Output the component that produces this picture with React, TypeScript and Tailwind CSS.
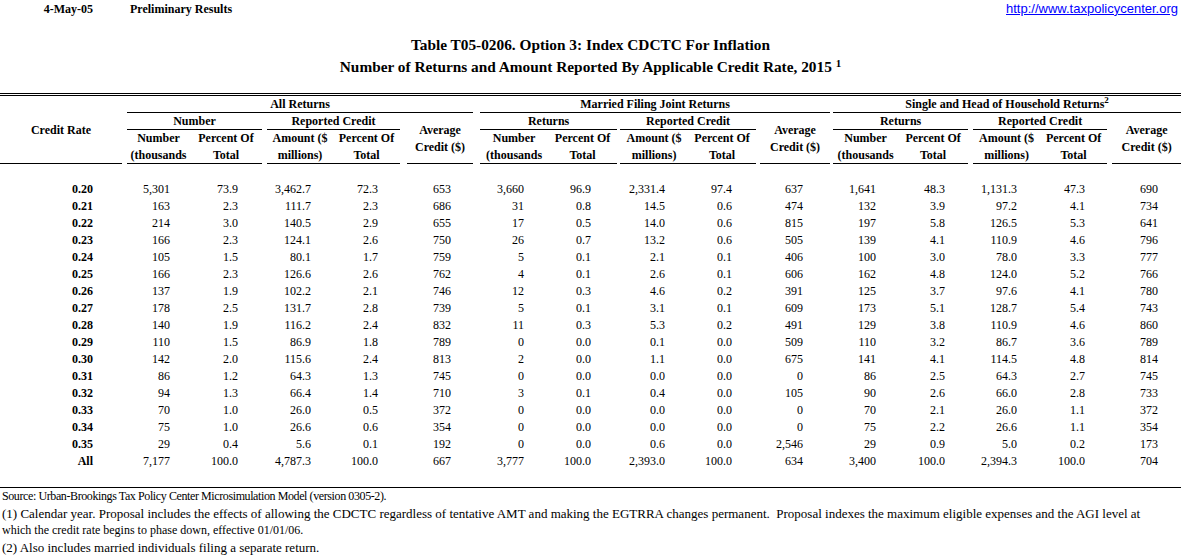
const colWidths = [
  "w-[122px]", "w-[5px]", "w-[63px]", "w-[72px]", "w-[5px]", "w-[66px]", "w-[67px]", "w-[7px]", "w-[66px]",
  "w-[7px]", "w-[68px]", "w-[69px]", "w-[3px]", "w-[68px]", "w-[68px]", "w-[4px]", "w-[70px]",
  "w-[3px]", "w-[65px]", "w-[70px]", "w-[5px]", "w-[67px]", "w-[67px]", "w-[5px]", "w-[69px]",
];

// -1 = spacer column, otherwise index into a data row
const layout = [0, -1, 1, 2, -1, 3, 4, -1, 5, -1, 6, 7, -1, 8, 9, -1, 10, -1, 11, 12, -1, 13, 14, -1, 15];

const pads = [
  "pr-[29px]", "pr-[20px]", "pr-[24px]", "pr-[22px]", "pr-[22px]", "pr-[22px]",
  "pr-[24px]", "pr-[26px]", "pr-[23px]", "pr-[24px]", "pr-[27px]",
  "pr-[22px]", "pr-[23px]", "pr-[23px]", "pr-[22px]", "pr-[23px]",
];

const rows = [
  ["0.20", "5,301", "73.9", "3,462.7", "72.3", "653", "3,660", "96.9", "2,331.4", "97.4", "637", "1,641", "48.3", "1,131.3", "47.3", "690"],
  ["0.21", "163", "2.3", "111.7", "2.3", "686", "31", "0.8", "14.5", "0.6", "474", "132", "3.9", "97.2", "4.1", "734"],
  ["0.22", "214", "3.0", "140.5", "2.9", "655", "17", "0.5", "14.0", "0.6", "815", "197", "5.8", "126.5", "5.3", "641"],
  ["0.23", "166", "2.3", "124.1", "2.6", "750", "26", "0.7", "13.2", "0.6", "505", "139", "4.1", "110.9", "4.6", "796"],
  ["0.24", "105", "1.5", "80.1", "1.7", "759", "5", "0.1", "2.1", "0.1", "406", "100", "3.0", "78.0", "3.3", "777"],
  ["0.25", "166", "2.3", "126.6", "2.6", "762", "4", "0.1", "2.6", "0.1", "606", "162", "4.8", "124.0", "5.2", "766"],
  ["0.26", "137", "1.9", "102.2", "2.1", "746", "12", "0.3", "4.6", "0.2", "391", "125", "3.7", "97.6", "4.1", "780"],
  ["0.27", "178", "2.5", "131.7", "2.8", "739", "5", "0.1", "3.1", "0.1", "609", "173", "5.1", "128.7", "5.4", "743"],
  ["0.28", "140", "1.9", "116.2", "2.4", "832", "11", "0.3", "5.3", "0.2", "491", "129", "3.8", "110.9", "4.6", "860"],
  ["0.29", "110", "1.5", "86.9", "1.8", "789", "0", "0.0", "0.1", "0.0", "509", "110", "3.2", "86.7", "3.6", "789"],
  ["0.30", "142", "2.0", "115.6", "2.4", "813", "2", "0.0", "1.1", "0.0", "675", "141", "4.1", "114.5", "4.8", "814"],
  ["0.31", "86", "1.2", "64.3", "1.3", "745", "0", "0.0", "0.0", "0.0", "0", "86", "2.5", "64.3", "2.7", "745"],
  ["0.32", "94", "1.3", "66.4", "1.4", "710", "3", "0.1", "0.4", "0.0", "105", "90", "2.6", "66.0", "2.8", "733"],
  ["0.33", "70", "1.0", "26.0", "0.5", "372", "0", "0.0", "0.0", "0.0", "0", "70", "2.1", "26.0", "1.1", "372"],
  ["0.34", "75", "1.0", "26.6", "0.6", "354", "0", "0.0", "0.0", "0.0", "0", "75", "2.2", "26.6", "1.1", "354"],
  ["0.35", "29", "0.4", "5.6", "0.1", "192", "0", "0.0", "0.6", "0.0", "2,546", "29", "0.9", "5.0", "0.2", "173"],
  ["All", "7,177", "100.0", "4,787.3", "100.0", "667", "3,777", "100.0", "2,393.0", "100.0", "634", "3,400", "100.0", "2,394.3", "100.0", "704"],
];

const line = "shadow-[inset_0_-1px_0_#000]";

function GroupSub({ first }: { first: string }) {
  return (
    <>
      <td />
      <td colSpan={2} className={`text-center ${line}`}>{first}</td>
      <td />
      <td colSpan={2} className={`text-center ${line}`}>Reported Credit</td>
      <td />
      <td rowSpan={3} className={`text-center align-middle ${line}`}>Average<br />Credit ($)</td>
    </>
  );
}

function ColHeads() {
  return (
    <>
      <td rowSpan={2} />
      <td rowSpan={2} className={`text-center ${line}`}>Number<br />(thousands</td>
      <td rowSpan={2} className={`text-center ${line}`}>Percent Of<br />Total</td>
      <td rowSpan={2} />
      <td rowSpan={2} className={`text-center ${line}`}>Amount ($<br />millions)</td>
      <td rowSpan={2} className={`text-center ${line}`}>Percent Of<br />Total</td>
      <td rowSpan={2} />
    </>
  );
}

export default function App() {
  return (
    <div className="w-[1181px] h-[556px] bg-white text-black font-['Liberation_Serif','Times_New_Roman',serif] overflow-hidden">
      <div className="flex h-[17px] items-center text-[12px] font-bold">
        <span className="w-[93px] text-right">4-May-05</span>
        <span className="ml-[37px]">Preliminary Results</span>
        <a className="ml-auto pr-[3px] font-['Liberation_Sans',Arial,sans-serif] text-[13px] font-normal text-[#0000ff] underline">
          http://www.taxpolicycenter.org
        </a>
      </div>
      <div className="h-[17px]" />
      <div className="text-center text-[15.33px] font-bold leading-[22px]">
        <div className="h-[22px]">Table T05-0206. Option 3: Index CDCTC For Inflation</div>
        <div className="h-[22px]">
          Number of Returns and Amount Reported By Applicable Credit Rate, 2015{" "}
          <span className="relative -top-[5px] text-[11px]">1</span>
        </div>
      </div>
      <div className="h-[15px]" />
      <div className="h-[3px] border-y border-black" />

      <table className="table-fixed w-[1181px] border-collapse text-[12px] leading-[17px]">
        <colgroup>
          {colWidths.map((w, i) => <col key={i} className={w} />)}
        </colgroup>
        <thead className="font-bold">
          <tr className="h-[17px]">
            <td rowSpan={4} className={`text-center align-middle ${line}`}>Credit Rate</td>
            <td />
            <td colSpan={7} className={`text-center ${line}`}>All Returns</td>
            <td />
            <td colSpan={7} className={`text-center ${line}`}>Married Filing Joint Returns</td>
            <td />
            <td colSpan={7} className={`text-center whitespace-nowrap ${line}`}>
              Single and Head of Household Returns<span className="relative -top-[5px] text-[9px] leading-none">2</span>
            </td>
          </tr>
          <tr className="h-[17px]">
            <GroupSub first="Number" />
            <GroupSub first="Returns" />
            <GroupSub first="Returns" />
          </tr>
          <tr className="h-[17px]">
            <ColHeads />
            <ColHeads />
            <ColHeads />
          </tr>
          <tr className="h-[17px]" />
        </thead>
        <tbody>
          <tr className="h-[17px]"><td colSpan={25} /></tr>
          {rows.map((r) => (
            <tr key={r[0]} className="h-[17px]">
              {layout.map((idx, i) =>
                idx < 0 ? (
                  <td key={i} />
                ) : (
                  <td key={i} className={`text-right whitespace-nowrap ${pads[idx]} ${idx === 0 ? "font-bold" : ""}`}>
                    {r[idx]}
                  </td>
                )
              )}
            </tr>
          ))}
          <tr className="h-[17px]"><td colSpan={25} /></tr>
        </tbody>
      </table>

      <div className="h-px bg-black" />
      <div className="pl-[2px] leading-[17px] whitespace-nowrap">
        <div className="text-[12px] tracking-[-0.4px]">Source: Urban-Brookings Tax Policy Center Microsimulation Model (version 0305-2).</div>
        <div className="text-[13px]">(1) Calendar year. Proposal includes the effects of allowing the CDCTC regardless of tentative AMT and making the EGTRRA changes permanent.&nbsp; Proposal indexes the maximum eligible expenses and the AGI level at</div>
        <div className="text-[12px]">which the credit rate begins to phase down, effective 01/01/06.</div>
        <div className="text-[13px]">(2) Also includes married individuals filing a separate return.</div>
      </div>
    </div>
  );
}
